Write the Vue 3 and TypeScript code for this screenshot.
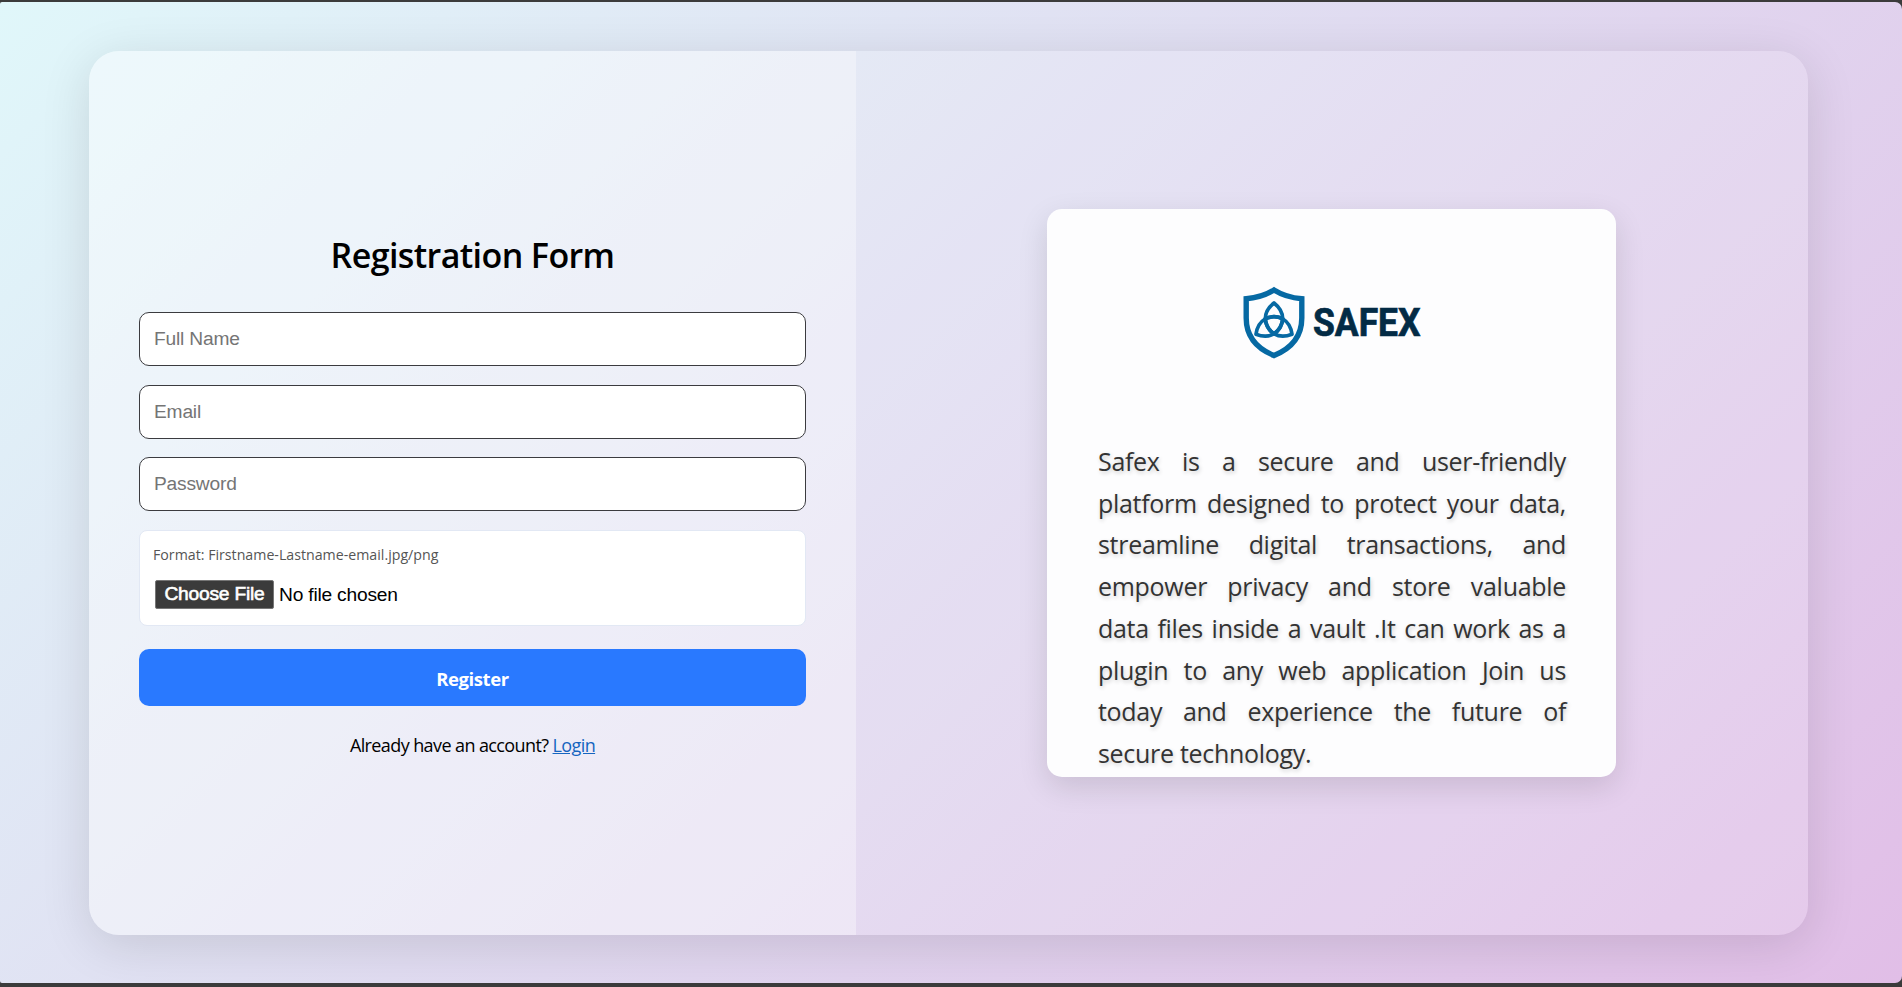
<script setup lang="ts">
import { ref } from 'vue'

interface Field {
  key: string
  type: string
  placeholder: string
}

const fields: Field[] = [
  { key: 'name', type: 'text', placeholder: 'Full Name' },
  { key: 'email', type: 'email', placeholder: 'Email' },
  { key: 'password', type: 'password', placeholder: 'Password' },
]

const values = ref<Record<string, string>>({ name: '', email: '', password: '' })

const about: string[] = [
  'Safex is a secure and user-friendly',
  'platform designed to protect your data,',
  'streamline digital transactions, and',
  'empower privacy and store valuable',
  'data files inside a vault .It can work as a',
  'plugin to any web application Join us',
  'today and experience the future of',
  'secure technology.',
]
</script>

<template>
  <div class="frame">
    <main class="page">
      <div class="card">
        <section class="form-side">
          <form class="form" @submit.prevent>
            <h1>Registration Form</h1>
            <input
              v-for="f in fields"
              :key="f.key"
              v-model="values[f.key]"
              class="field"
              :type="f.type"
              :placeholder="f.placeholder"
            />
            <div class="upload">
              <label for="photo">Format: Firstname-Lastname-email.jpg/png</label>
              <input id="photo" type="file" />
            </div>
            <button class="submit" type="submit">Register</button>
            <p class="login">Already have an account? <a href="#">Login</a></p>
          </form>
        </section>
        <section class="info-side">
          <article class="info">
            <svg class="logo" width="190" height="72" viewBox="0 0 190 72" role="img" aria-label="Safex">
              <path
                d="M31 3 C39 8 49 11 58.800 11.700 V31 C58.800 50 47 62 31 68.500 C15 62 3.200 50 3.200 31 V11.700 C13 11 23 8 31 3 Z"
                fill="none" stroke="#0669a3" stroke-width="5.400"
              />
              <g fill="none" stroke="#0669a3" stroke-width="3.700" stroke-linejoin="round">
                <path d="M31 47 C19.500 38 19.500 25 31 16 C42.500 25 42.500 38 31 47 Z" />
                <path d="M31 47 C19.500 38 19.500 25 31 16 C42.500 25 42.500 38 31 47 Z" transform="rotate(120 31 36.800)" />
                <path d="M31 47 C19.500 38 19.500 25 31 16 C42.500 25 42.500 38 31 47 Z" transform="rotate(240 31 36.800)" />
              </g>
              <text x="70" y="48.500" textLength="107.500" lengthAdjust="spacingAndGlyphs">SAFEX</text>
            </svg>
            <p class="about">
              <span v-for="line in about" :key="line" class="line">{{ line }}</span>
            </p>
          </article>
        </section>
      </div>
    </main>
  </div>
</template>

<style>
body {
  margin: 0;
  background: #3b3b3b;
  overflow: hidden;
}
</style>

<style scoped>
* {
  box-sizing: border-box;
}
.frame {
  height: 987px;
  padding: 2px 0 4px;
  background: #3b3b3b;
  font-family: 'Open Sans', 'Noto Sans', sans-serif;
}
.page {
  height: 981px;
  padding: 49px 94px 48px 89px;
  border-radius: 2px 7px 7px 2px;
  background: linear-gradient(135deg, #e0f7fa, #e1bee7);
  overflow: hidden;
}
.card {
  display: flex;
  height: 884px;
  border-radius: 30px;
  overflow: hidden;
  background: rgba(255, 255, 255, 0.15);
  box-shadow: 0 10px 50px rgba(0, 0, 0, 0.12);
}
.form-side {
  width: 767px;
  padding: 180px 50px 0;
  background: rgba(255, 255, 255, 0.35);
}
.form {
  display: flex;
  flex-direction: column;
}
h1 {
  margin: 0 0 33px;
  height: 48px;
  line-height: 48px;
  text-align: center;
  font-size: 34px;
  font-weight: 600;
  letter-spacing: -0.6px;
  color: #000;
}
.field {
  height: 54px;
  margin-bottom: 18.500px;
  padding: 0 14px;
  border: 1px solid #3b3b3f;
  border-radius: 10px;
  background: #fff;
  font: 19.200px 'Liberation Sans', Arial, sans-serif;
  letter-spacing: -0.2px;
}
.field::placeholder {
  color: #757575;
}
.upload {
  height: 96px;
  padding: 14px 14px 14px 13px;
  border: 1px solid #e2e8f4;
  border-radius: 8px;
  background: #fff;
}
.upload label {
  display: block;
  height: 20px;
  line-height: 20px;
  margin-bottom: 15px;
  font-size: 14.200px;
  letter-spacing: 0;
  color: #555;
}
.upload input {
  display: block;
  width: 500px;
  height: 30px;
  padding: 0 2px;
  font: 19.200px 'Liberation Sans', Arial, sans-serif;
  letter-spacing: -0.2px;
  color: #000;
}
.upload input::file-selector-button {
  height: 29px;
  width: 119px;
  padding: 0;
  margin-right: 5px;
  border: 1px solid #767676;
  border-radius: 2px;
  background: #3b3b3b;
  color: #fff;
  font: 19.200px 'Liberation Sans', Arial, sans-serif;
  letter-spacing: -0.2px;
  -webkit-text-stroke: 0.6px #fff;
}
.submit {
  height: 57px;
  margin-top: 23px;
  padding: 2px 0 0;
  border: 0;
  border-radius: 10px;
  background: #2979ff;
  color: #fff;
  font: 700 18.500px 'Open Sans', sans-serif;
  letter-spacing: -0.4px;
}
.login {
  margin: 26px 0 0;
  text-align: center;
  font-size: 18px;
  line-height: 26px;
  letter-spacing: -0.6px;
  color: #000;
}
.login a {
  color: #1565c0;
  text-decoration: underline;
}
.info-side {
  flex: 1;
  padding: 158px 0 0 191px;
}
.info {
  width: 569px;
  height: 568px;
  padding: 78px 50px 0 51px;
  border-radius: 15px;
  background: #fdfdfe;
  box-shadow: 0 10px 30px rgba(0, 0, 0, 0.12);
}
.logo {
  display: block;
  margin: 0 0 0 145px;
  overflow: visible;
}
.logo text {
  font: 700 38px Roboto, sans-serif;
  fill: #032b45;
  stroke: #032b45;
  stroke-width: 0.700px;
}
.about {
  margin: 82px 0 0;
  font-size: 25px;
  line-height: 41.700px;
  letter-spacing: -0.3px;
  color: #333;
  text-shadow: 1px 2px 4px rgba(0, 0, 0, 0.2);
}
.line {
  display: block;
  white-space: nowrap;
  text-align: justify;
  text-align-last: justify;
}
.line:last-child {
  text-align-last: left;
}
</style>
